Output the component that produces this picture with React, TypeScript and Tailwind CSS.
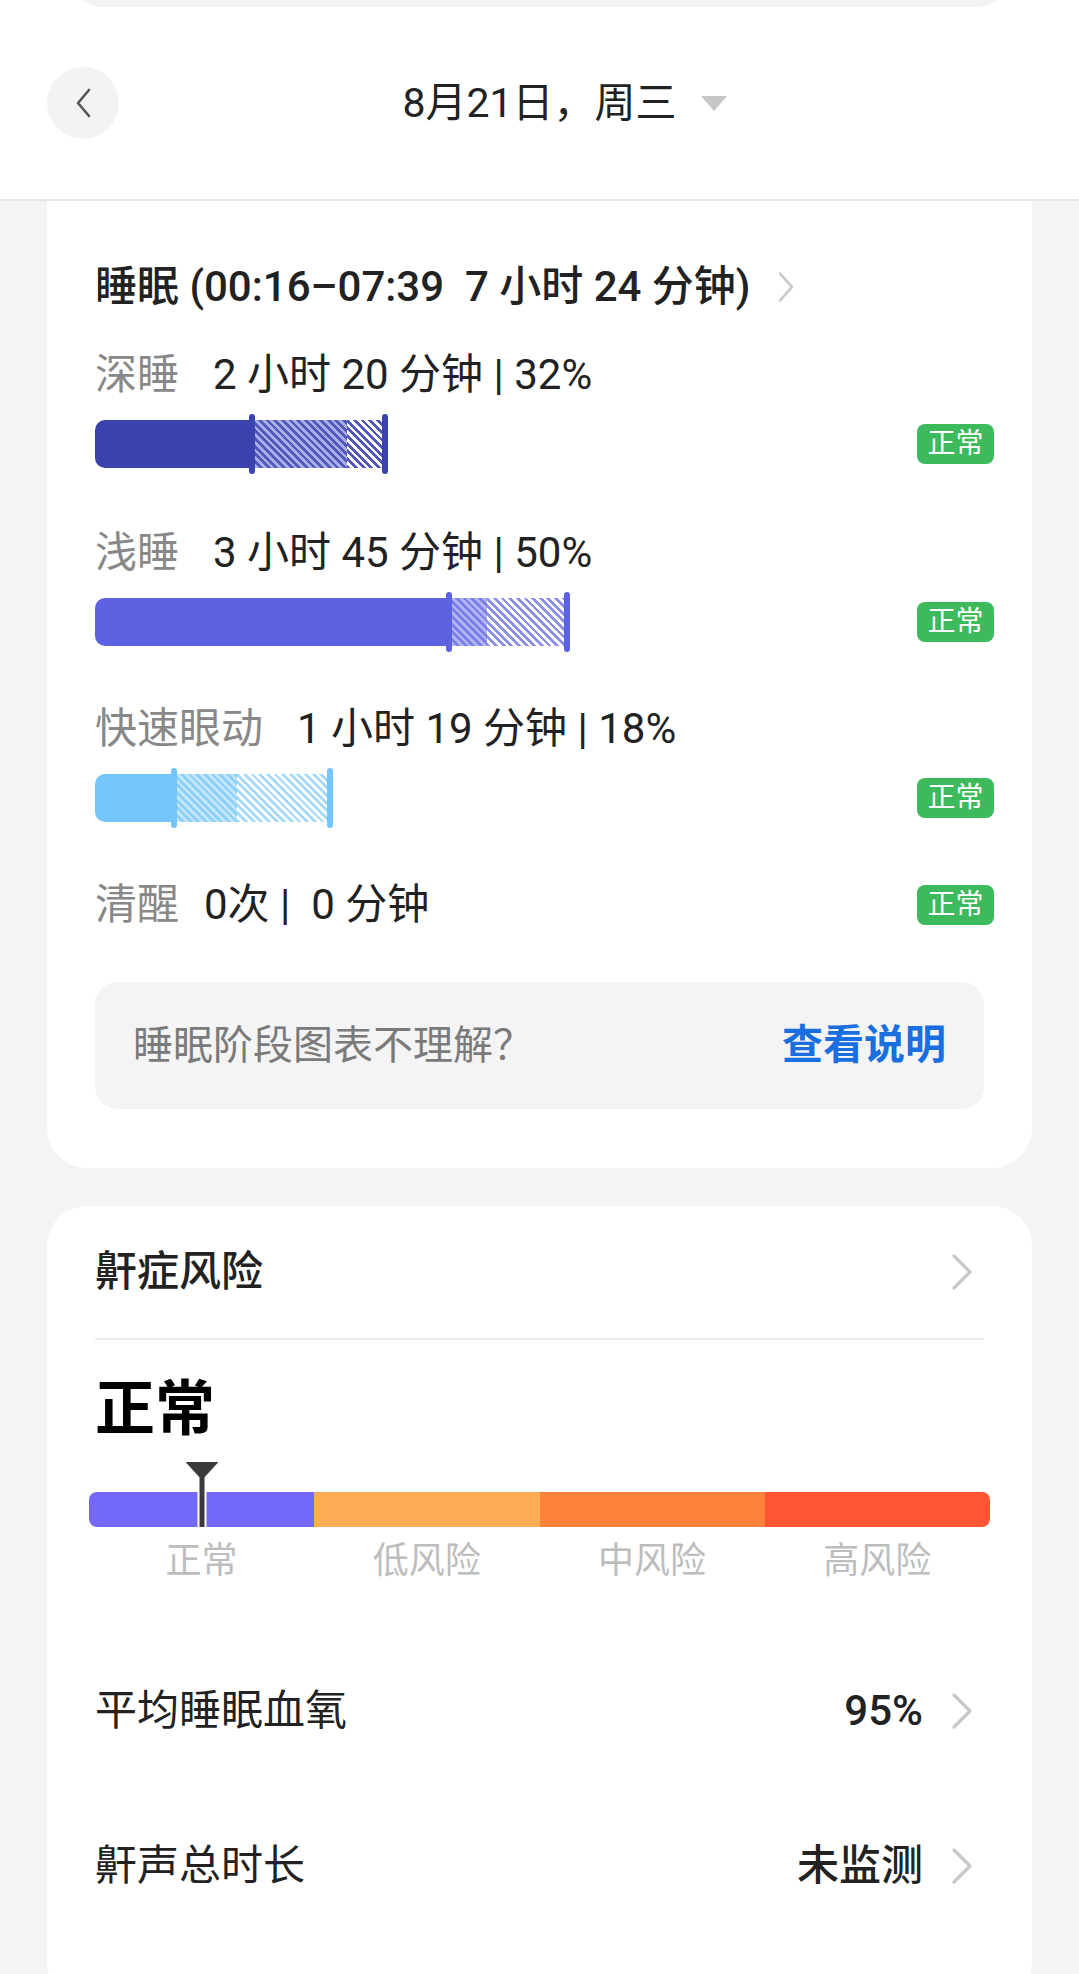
import React from 'react';

type Stage = {
  label: string;
  value: string;
  solid: string;
  soft: string;
  open: string;
  marker: string;
  m1: string;
  m2: string;
};

const stages: Stage[] = [
  {
    label: '深睡',
    value: '2 小时 20 分钟 | 32%',
    solid: 'w-[157px] bg-[#3a42ae]',
    soft: 'w-[95px] bg-[image:repeating-linear-gradient(45deg,#5259bb_0px,#5259bb_2.7px,#aaaee8_2.7px,#aaaee8_5.4px)]',
    open: 'w-[38px] bg-[image:repeating-linear-gradient(45deg,#5259bb_0px,#5259bb_2.7px,#ffffff_2.7px,#ffffff_5.4px)]',
    marker: 'bg-[#3a42ae]',
    m1: 'left-[154px]',
    m2: 'left-[287px]',
  },
  {
    label: '浅睡',
    value: '3 小时 45 分钟 | 50%',
    solid: 'w-[354px] bg-[#5d62e2]',
    soft: 'w-[38px] bg-[image:repeating-linear-gradient(45deg,#7b80e6_0px,#7b80e6_2.7px,#b3b5f2_2.7px,#b3b5f2_5.4px)]',
    open: 'w-[80px] bg-[image:repeating-linear-gradient(45deg,#8c90e8_0px,#8c90e8_2.7px,#ffffff_2.7px,#ffffff_5.4px)]',
    marker: 'bg-[#5d62e2]',
    m1: 'left-[351px]',
    m2: 'left-[469px]',
  },
  {
    label: '快速眼动',
    value: '1 小时 19 分钟 | 18%',
    solid: 'w-[79px] bg-[#74c6fa]',
    soft: 'w-[63px] bg-[image:repeating-linear-gradient(45deg,#8fd0f9_0px,#8fd0f9_2.7px,#c4e6fd_2.7px,#c4e6fd_5.4px)]',
    open: 'w-[93px] bg-[image:repeating-linear-gradient(45deg,#a5dafb_0px,#a5dafb_2.7px,#ffffff_2.7px,#ffffff_5.4px)]',
    marker: 'bg-[#74c6fa]',
    m1: 'left-[76px]',
    m2: 'left-[232px]',
  },
];

const Badge = () => (
  <div className="-mr-[10px] flex h-[40px] w-[77px] items-center justify-center rounded-[8px] bg-[#3dba5c] text-[28px] leading-none text-white">
    正常
  </div>
);

const Chevron = ({ small }: { small?: boolean }) => (
  <svg
    className={small ? 'h-[32px] w-[18px]' : 'h-[38px] w-[24px]'}
    viewBox="0 0 24 38"
    fill="none"
    stroke="#c8c8c8"
    strokeWidth={3.2}
    strokeLinecap="round"
    strokeLinejoin="round"
    preserveAspectRatio="none"
  >
    <path d="M4 3 L20 19 L4 35" />
  </svg>
);

const StageBar = ({ s }: { s: Stage }) => (
  <div className="relative flex h-[48px]">
    <div className={`${s.solid} h-full rounded-l-[10px]`} />
    <div className={`${s.soft} h-full`} />
    <div className={`${s.open} h-full`} />
    <div className={`absolute -top-[6px] h-[60px] w-[6px] rounded-full ${s.marker} ${s.m1}`} />
    <div className={`absolute -top-[6px] h-[60px] w-[6px] rounded-full ${s.marker} ${s.m2}`} />
  </div>
);

export default function App() {
  return (
    <div className="min-h-[1974px] bg-[#f4f4f4] font-[family-name:Roboto,'Noto_Sans_CJK_SC',sans-serif] text-[#222]">
      {/* header */}
      <div className="border-b-2 border-[#e6e6e6] bg-white">
        <div className="mx-[72px] flex h-[7px] flex-col justify-end overflow-hidden">
          <div className="h-[40px] shrink-0 rounded-b-[30px] bg-[#f3f3f3]" />
        </div>
        <div className="relative flex h-[192px] items-center px-[47px]">
          <div className="flex h-[72px] w-[72px] items-center justify-center rounded-full bg-[#f3f3f3]">
            <svg className="h-[30px] w-[16px]" viewBox="0 0 16 30" fill="none" stroke="#555" strokeWidth="2.6" strokeLinecap="round" strokeLinejoin="round">
              <path d="M14 2 L3 15 L14 28" />
            </svg>
          </div>
          <div className="absolute inset-x-0 flex items-center justify-center">
            <div className="w-[50px]" />
            <span className="text-[41px] leading-none text-[#222]">8月21日，周三</span>
            <svg className="ml-[24px] h-[15px] w-[26px]" viewBox="0 0 26 15">
              <path d="M0 0 H26 L13 15 Z" fill="#c6c6c6" />
            </svg>
          </div>
        </div>
      </div>

      {/* sleep card */}
      <div className="mx-[47px] rounded-b-[40px] bg-white px-[48px] pb-[59px] pt-[61px]">
        <div className="flex h-[50px] items-center">
          <span className="text-[42px] font-medium leading-none">睡眠 (00:16–07:39&nbsp;&nbsp;7 小时 24 分钟)</span>
          <span className="ml-[26px] flex items-center">
            <Chevron small />
          </span>
        </div>

        {stages.map((s, i) => (
          <div key={s.label} className={i === 0 ? 'mt-[38px]' : i === 1 ? 'mt-[60px]' : 'mt-[58px]'}>
            <div className="flex h-[50px] items-center text-[42px] leading-none">
              <span className="text-[#888]">{s.label}</span>
              <span className="ml-[34px]">{s.value}</span>
            </div>
            <div className="mt-[20px] flex h-[48px] items-center justify-between">
              <StageBar s={s} />
              <Badge />
            </div>
          </div>
        ))}

        <div className="mt-[58px] flex h-[50px] items-center justify-between">
          <div className="flex items-center text-[42px] leading-none">
            <span className="text-[#888]">清醒</span>
            <span className="ml-[25px]">0次 |&nbsp;&nbsp;0 分钟</span>
          </div>
          <Badge />
        </div>

        <div className="mt-[52px] flex h-[127px] items-center justify-between rounded-[22px] bg-[#f4f4f4] px-[38px]">
          <span className="text-[40px] leading-none text-[#7a7a7a]">睡眠阶段图表不理解？</span>
          <span className="text-[41px] font-semibold leading-none text-[#1a6fe0]">查看说明</span>
        </div>
      </div>

      {/* snore card */}
      <div className="mx-[47px] mt-[38px] rounded-[40px] bg-white px-[48px] pb-[60px]">
        <div className="flex h-[132px] items-center justify-between">
          <span className="text-[42px] font-medium leading-none">鼾症风险</span>
          <span className="mr-[10px] flex items-center">
            <Chevron />
          </span>
        </div>
        <div className="h-[2px] bg-[#ececec]" />

        <div className="mt-[35px] h-[70px] text-[60px] font-bold leading-[70px] text-black">正常</div>

        <div className="relative -mx-[6px] mt-[17px] pt-[30px]">
          <div className="grid h-[35px] grid-cols-4 overflow-hidden rounded-[8px]">
            <div className="bg-[#7468fa]" />
            <div className="bg-[#fdae55]" />
            <div className="bg-[#ff823c]" />
            <div className="bg-[#ff5533]" />
          </div>
          <svg className="absolute left-[12.5%] top-0 h-[65px] w-[33px] -translate-x-1/2" viewBox="0 0 33 65">
            <rect x="12" y="28" width="9" height="37" fill="#ffffff" />
            <rect x="14" y="10" width="5" height="55" fill="#3a3a3a" />
            <path d="M0 0 H33 L16.5 18 Z" fill="#3a3a3a" />
          </svg>
        </div>

        <div className="-mx-[6px] mt-[14px] grid h-[40px] grid-cols-4 items-center text-center text-[36px] leading-none text-[#bdbdbd]">
          <span>正常</span>
          <span>低风险</span>
          <span>中风险</span>
          <span>高风险</span>
        </div>

        <div className="mt-[52px]">
          {[
            { k: '平均睡眠血氧', v: '95%' },
            { k: '鼾声总时长', v: '未监测' },
          ].map((r) => (
            <div key={r.k} className="flex h-[155px] items-center justify-between">
              <span className="text-[42px] leading-none">{r.k}</span>
              <div className="mr-[10px] flex items-center">
                <span className="text-[42px] font-medium leading-none">{r.v}</span>
                <span className="ml-[27px] flex items-center">
                  <Chevron />
                </span>
              </div>
            </div>
          ))}
        </div>
      </div>
    </div>
  );
}
